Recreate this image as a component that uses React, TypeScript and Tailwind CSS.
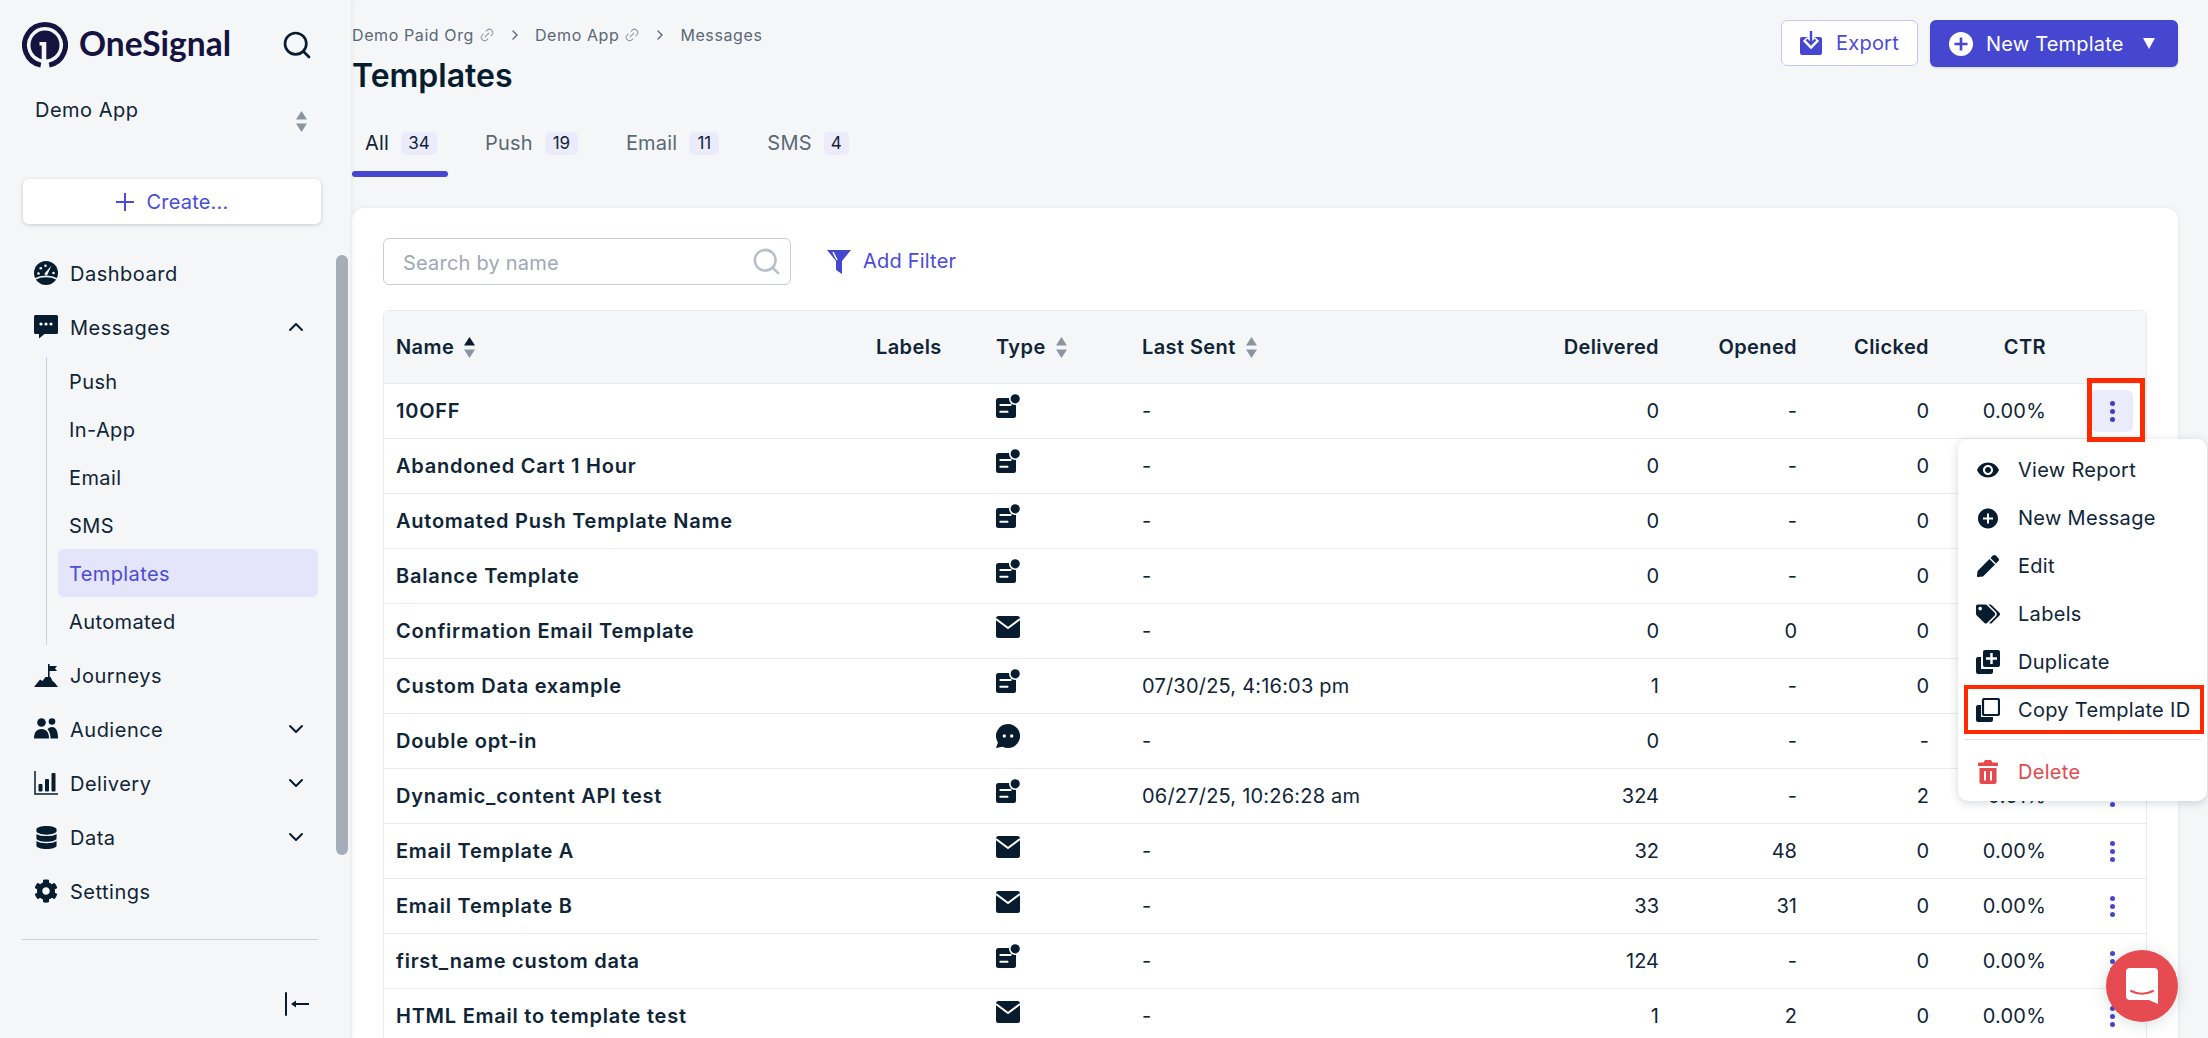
import { ChevronDown, ChevronRight, ChevronUp, Link2, Search } from "lucide-react";
import { FaCog, FaDatabase, FaPen, FaTags } from "react-icons/fa";
import { MdAddCircle, MdRemoveRedEye } from "react-icons/md";

type Kind = "push" | "mail" | "chat";

interface Row {
  name: string;
  kind: Kind;
  sent: string;
  delivered: string;
  opened: string;
  clicked: string;
  ctr: string;
}

// CTR is left empty on the rows the open menu covers
const ROWS: Row[] = [
  { name: "10OFF", kind: "push", sent: "-", delivered: "0", opened: "-", clicked: "0", ctr: "0.00%" },
  { name: "Abandoned Cart 1 Hour", kind: "push", sent: "-", delivered: "0", opened: "-", clicked: "0", ctr: "" },
  { name: "Automated Push Template Name", kind: "push", sent: "-", delivered: "0", opened: "-", clicked: "0", ctr: "" },
  { name: "Balance Template", kind: "push", sent: "-", delivered: "0", opened: "-", clicked: "0", ctr: "" },
  { name: "Confirmation Email Template", kind: "mail", sent: "-", delivered: "0", opened: "0", clicked: "0", ctr: "" },
  { name: "Custom Data example", kind: "push", sent: "07/30/25, 4:16:03 pm", delivered: "1", opened: "-", clicked: "0", ctr: "" },
  { name: "Double opt-in", kind: "chat", sent: "-", delivered: "0", opened: "-", clicked: "-", ctr: "" },
  { name: "Dynamic_content API test", kind: "push", sent: "06/27/25, 10:26:28 am", delivered: "324", opened: "-", clicked: "2", ctr: "0.51%" },
  { name: "Email Template A", kind: "mail", sent: "-", delivered: "32", opened: "48", clicked: "0", ctr: "0.00%" },
  { name: "Email Template B", kind: "mail", sent: "-", delivered: "33", opened: "31", clicked: "0", ctr: "0.00%" },
  { name: "first_name custom data", kind: "push", sent: "-", delivered: "124", opened: "-", clicked: "0", ctr: "0.00%" },
  { name: "HTML Email to template test", kind: "mail", sent: "-", delivered: "1", opened: "2", clicked: "0", ctr: "0.00%" },
];

function TypeIcon({ kind }: { kind: Kind }) {
  if (kind === "mail") {
    return (
      <svg width="24" height="22" viewBox="0 0 24 22" className="block mt-[1px]">
        <rect width="24" height="22" rx="2.5" fill="#071c2f" />
        <path d="M0 3l12 9 12-9" fill="none" stroke="#fff" strokeWidth="2" />
      </svg>
    );
  }
  if (kind === "chat") {
    return (
      <svg width="24" height="24" viewBox="0 0 24 24" className="block">
        <path d="M12 0a12 12 0 1 1-5.4 22.7L0 24l1.9-5.6A12 12 0 0 1 12 0z" fill="#071c2f" />
        <circle cx="8.3" cy="12" r="1.7" fill="#fff" />
        <circle cx="15.7" cy="12" r="1.7" fill="#fff" />
      </svg>
    );
  }
  return (
    <svg width="24" height="24" viewBox="0 0 24 24" className="block">
      <rect y="4" width="20" height="20" rx="2.5" fill="#071c2f" />
      <circle cx="19.2" cy="4.8" r="6.2" fill="#fff" />
      <circle cx="19.2" cy="4.8" r="4.6" fill="#071c2f" />
      <rect x="3.3" y="10" width="12.4" height="2" rx="1" fill="#fff" />
      <rect x="3.3" y="16.8" width="9.2" height="2" rx="1" fill="#fff" />
    </svg>
  );
}

function SortIcon({ active = false, className = "" }: { active?: boolean; className?: string }) {
  return (
    <svg width="11" height="21" viewBox="0 0 11 21" className={className}>
      <path d="M5.5 0L11 8.5H0z" fill={active ? "#071c2f" : "#8b95a0"} />
      <path d="M5.5 21L0 12.5h11z" fill="#8b95a0" />
    </svg>
  );
}

function Logo() {
  return (
    <svg width="46" height="46" viewBox="0 0 46 46" className="shrink-0">
      <path d="M18.8 43.1a20.5 20.5 0 1 1 8.4 0" fill="none" stroke="#15133f" strokeWidth="5" />
      <circle cx="23" cy="23" r="14.5" fill="#15133f" />
      <path d="M17.500 20h6.800v26h-4.600V23.500h-2.200z" fill="#f5f6f8" />
    </svg>
  );
}

function DashboardIcon() {
  return (
    <svg width="24" height="24" viewBox="0 0 24 24">
      <circle cx="12" cy="12" r="12" fill="#071c2f" />
      <path d="M10.500 12.500L17.500 4.500l-4.400 9.800a2.200 2.200 0 0 1-2.600-1.800z" fill="#f5f6f8" />
      <circle cx="4.500" cy="12.500" r="1.300" fill="#f5f6f8" />
      <circle cx="6.800" cy="7.300" r="1.300" fill="#f5f6f8" />
      <circle cx="11.500" cy="4.800" r="1.300" fill="#f5f6f8" />
      <circle cx="19.500" cy="12" r="1.300" fill="#f5f6f8" />
      <path d="M1 18c6-3.400 16-3.400 22 0" fill="none" stroke="#f5f6f8" strokeWidth="1.700" />
    </svg>
  );
}

function MessagesIcon() {
  return (
    <svg width="24" height="24" viewBox="0 0 24 24">
      <path d="M1.500 0h21A1.500 1.500 0 0 1 24 1.500v16a1.500 1.500 0 0 1-1.500 1.500H10.500L5 23.500V19H1.500A1.500 1.500 0 0 1 0 17.500v-16A1.500 1.500 0 0 1 1.500 0z" fill="#071c2f" />
      <circle cx="7" cy="9" r="1.600" fill="#fff" />
      <circle cx="12" cy="9" r="1.600" fill="#fff" />
      <circle cx="17" cy="9" r="1.600" fill="#fff" />
    </svg>
  );
}

function JourneysIcon() {
  return (
    <svg width="24" height="24" viewBox="0 0 24 24">
      <path d="M14 1h1.600v2H23l-2 2.500L23 8h-7.400v6H14z" fill="#071c2f" />
      <path d="M0 24l6-7.500 2.500 1.500 3-4h5l2 4 2 1.500 3.500 4.500z" fill="#071c2f" />
    </svg>
  );
}

function AudienceIcon() {
  return (
    <svg width="24" height="24" viewBox="0 0 24 24">
      <circle cx="7.500" cy="5.500" r="4.300" fill="#071c2f" />
      <circle cx="18" cy="4.500" r="3.300" fill="#071c2f" />
      <path d="M0 21.500c0-6 2.500-9.500 7.500-9.500s7.500 3.500 7.500 9.500z" fill="#071c2f" />
      <path d="M16.500 21.500c0-4-1-7-3-9.200 1.200-1.500 2.700-2.300 4.500-2.300 4 0 6 4 6 11.500z" fill="#071c2f" />
    </svg>
  );
}

function DeliveryIcon() {
  return (
    <svg width="24" height="24" viewBox="0 0 24 24">
      <path d="M1 0v23h23" fill="none" stroke="#071c2f" strokeWidth="1.500" />
      <rect x="4.500" y="13" width="4" height="7.500" rx="1" fill="#071c2f" />
      <rect x="11" y="8" width="4" height="12.500" rx="1" fill="#071c2f" />
      <rect x="17.500" y="2" width="4" height="18.500" rx="1" fill="#071c2f" />
    </svg>
  );
}

function NavItem({ label, icon, chevron }: { label: string; icon: React.ReactNode; chevron?: "up" | "down" }) {
  return (
    <div className="h-[54px] pl-[34px] pr-[43px] flex items-center text-[20px] text-[#0f2537]">
      <span className="w-[24px] h-[24px] flex items-center justify-center shrink-0">{icon}</span>
      <span className="ml-[12px] pt-[2px] tracking-[0.5px]">{label}</span>
      {chevron === "up" && <ChevronUp size={24} strokeWidth={2} className="ml-auto text-[#071c2f]" />}
      {chevron === "down" && <ChevronDown size={24} strokeWidth={2} className="ml-auto text-[#071c2f]" />}
    </div>
  );
}

function Sidebar() {
  return (
    <aside className="w-[352px] shrink-0 h-full relative flex flex-col border-r border-[#eceef1] shadow-[2px_0_4px_rgba(0,0,0,0.03)]">
      <div className="h-[89px] pl-[22px] pr-[38px] flex items-center">
        <Logo />
        <span className="ml-[11px] pb-[2px] text-[33.5px] font-bold text-[#15133f] [font-family:Lato,sans-serif]">OneSignal</span>
        <Search size={32} strokeWidth={2} className="ml-auto text-[#071c2f]" />
      </div>
      <div className="h-[90px] pl-[35px] pr-[44px] flex justify-between">
        <span className="text-[20px] leading-[28px] mt-[7px] text-[#0f2537] tracking-[0.5px]">Demo App</span>
        <SortIcon className="mt-[22px]" />
      </div>
      <button className="mx-[23px] w-[298px] h-[45px] shrink-0 bg-white rounded-[6px] shadow-[0_1px_4px_rgba(15,37,55,0.2)] flex items-center justify-center gap-[13px] text-[20px] text-[#4a4bd6] tracking-[0.2px]">
        <svg width="18" height="18" viewBox="0 0 18 18">
          <path d="M9 0v18M0 9h18" stroke="#4a4bd6" strokeWidth="2" />
        </svg>
        Create...
      </button>
      <nav className="mt-[22px]">
        <NavItem label="Dashboard" icon={<DashboardIcon />} />
        <NavItem label="Messages" icon={<MessagesIcon />} chevron="up" />
        <div className="ml-[46px] my-[3px] w-[272px] border-l border-[#c9d1db] pl-[11px] text-[20px] text-[#0f2537] tracking-[0.4px]">
          {["Push", "In-App", "Email", "SMS", "Templates", "Automated"].map((item) => (
            <div
              key={item}
              className={
                item === "Templates"
                  ? "h-[48px] pl-[11px] pt-[2px] flex items-center rounded-[6px] bg-[#e4e4fa] text-[#4a4bd6]"
                  : "h-[48px] pl-[11px] pt-[2px] flex items-center"
              }
            >
              {item}
            </div>
          ))}
        </div>
        <NavItem label="Journeys" icon={<JourneysIcon />} />
        <NavItem label="Audience" icon={<AudienceIcon />} chevron="down" />
        <NavItem label="Delivery" icon={<DeliveryIcon />} chevron="down" />
        <NavItem label="Data" icon={<FaDatabase size={23} className="text-[#071c2f]" />} chevron="down" />
        <NavItem label="Settings" icon={<FaCog size={24} className="text-[#071c2f]" />} />
      </nav>
      <div className="mx-[22px] mt-[21px] w-[296px] h-px bg-[#cdd1da]" />
      <div className="mt-[52px] pr-[42px] flex justify-end">
        <svg width="24" height="24" viewBox="0 0 24 24">
          <path d="M1 1v22" stroke="#071c2f" strokeWidth="2" strokeLinecap="round" />
          <path d="M8 11h16v2H8z" fill="#071c2f" />
          <path d="M6 12l5-3.500v7z" fill="#071c2f" />
        </svg>
      </div>
      {/* scroll thumb */}
      <div className="absolute left-[336px] top-[255px] w-[12px] h-[600px] rounded-[6px] bg-[#a4adb8]" />
    </aside>
  );
}

function Crumb({ label, link = false }: { label: string; link?: boolean }) {
  return (
    <span className="flex items-center">
      <span>{label}</span>
      {link && <Link2 size={16} strokeWidth={1.5} className="ml-[5px] -rotate-45 text-[#8b95a0]" />}
    </span>
  );
}

function Tab({ label, count, badge, active = false }: { label: string; count: string; badge: string; active?: boolean }) {
  return (
    <div className="flex flex-col">
      <div className="h-[46px] pl-[13px] pr-[11px] flex items-center">
        <span className={active ? "text-[20px] text-[#0f2537] tracking-[0.2px]" : "text-[20px] text-[#5b6877] tracking-[0.2px]"}>{label}</span>
        <span className={`ml-[12px] h-[23px] rounded-[5px] bg-[#ecebfb] text-center text-[17px] leading-[23px] text-[#0f2537] ${badge}`}>{count}</span>
      </div>
      <div className={active ? "mt-[5px] h-[6px] rounded-[3px] bg-[#4547d0]" : "mt-[5px] h-[6px]"} />
    </div>
  );
}

function Header() {
  return (
    <div className="flex justify-between pr-[30px]">
      <div>
        <div className="mt-[20px] h-[30px] flex items-center text-[16px] tracking-[0.6px] text-[#5b6877]">
          <Crumb label="Demo Paid Org" link />
          <ChevronRight size={16} strokeWidth={2} className="mx-[12px]" />
          <Crumb label="Demo App" link />
          <ChevronRight size={16} strokeWidth={2} className="mx-[12px]" />
          <Crumb label="Messages" />
        </div>
        <h1 className="h-[52px] text-[32px] leading-[52px] font-semibold text-[#071c2f]">Templates</h1>
        <div className="mt-[18px] flex gap-6">
          <Tab label="All" count="34" badge="w-[36px]" active />
          <Tab label="Push" count="19" badge="w-[33px]" />
          <Tab label="Email" count="11" badge="w-[30px]" />
          <Tab label="SMS" count="4" badge="w-[25px]" />
        </div>
      </div>
      <div className="mt-[20px] flex items-start gap-[12px]">
        <button className="w-[137px] h-[46px] flex items-center justify-center gap-[14px] bg-white border border-[#c5c4fb] rounded-[6px] text-[20px] text-[#4a4bd6] tracking-[0.2px]">
          <svg width="22" height="24" viewBox="0 0 22 24">
            <rect y="6" width="22" height="18" rx="2" fill="#4547d0" />
            <path d="M11 0v12M5 8l6 6 6-6" fill="none" stroke="#fff" strokeWidth="6" />
            <path d="M11 0v13M6.500 8.500l4.500 4.500 4.500-4.500" fill="none" stroke="#4547d0" strokeWidth="2.400" />
          </svg>
          Export
        </button>
        <button className="w-[248px] h-[47px] pl-[19px] flex items-center bg-[#4547d0] rounded-[6px] text-[20px] text-white tracking-[0.2px] shadow-[0_1px_2px_rgba(0,0,0,0.15)]">
          <svg width="24" height="24" viewBox="0 0 24 24">
            <circle cx="12" cy="12" r="12" fill="#fff" />
            <path d="M12 5.500v13M5.500 12h13" stroke="#4547d0" strokeWidth="2.600" />
          </svg>
          <span className="ml-[13px]">New Template</span>
          <svg width="12" height="11" viewBox="0 0 12 11" className="ml-[19px]">
            <path d="M0 0h12L6 11z" fill="#fff" />
          </svg>
        </button>
      </div>
    </div>
  );
}

function HeadCell({ children, right = false }: { children: React.ReactNode; right?: boolean }) {
  return <th className={right ? "px-[13px] text-right font-semibold tracking-[0.4px]" : "px-[13px] text-left font-semibold tracking-[0.4px]"}>{children}</th>;
}

function Table() {
  return (
    <table className="w-[1764px] table-fixed border-separate border-spacing-0 text-[20px] text-[#0f2537] border border-[#e8eaed] rounded-t-[6px]">
      <colgroup>
        <col className="w-[479px]" />
        <col className="w-[120px]" />
        <col className="w-[146px]" />
        <col className="w-[421px]" />
        <col className="w-[122px]" />
        <col className="w-[138px]" />
        <col className="w-[132px]" />
        <col className="w-[117px]" />
        <col />
      </colgroup>
      <thead>
        <tr className="h-[72px] bg-[#f5f6f8]">
          <th className="pl-[12px] text-left font-semibold tracking-[0.4px]">
            <span className="flex items-center">Name<SortIcon active className="ml-[10px]" /></span>
          </th>
          <HeadCell>Labels</HeadCell>
          <HeadCell>
            <span className="flex items-center">Type<SortIcon className="ml-[10px]" /></span>
          </HeadCell>
          <HeadCell>
            <span className="flex items-center">Last Sent<SortIcon className="ml-[10px]" /></span>
          </HeadCell>
          <HeadCell right>Delivered</HeadCell>
          <HeadCell right>Opened</HeadCell>
          <HeadCell right>Clicked</HeadCell>
          <HeadCell right>CTR</HeadCell>
          <th />
        </tr>
      </thead>
      <tbody>
        {ROWS.map((row, i) => (
          <tr key={row.name} className="h-[55px]">
            <td className="pl-[12px] font-semibold tracking-[0.75px] border-t border-[#e8eaed]">{row.name}</td>
            <td className="px-[13px] border-t border-[#e8eaed]" />
            <td className="px-[13px] border-t border-[#e8eaed]">
              <div className="-mt-[10px]"><TypeIcon kind={row.kind} /></div>
            </td>
            <td className="px-[13px] border-t border-[#e8eaed] tracking-[0.2px]">{row.sent}</td>
            <td className="px-[13px] text-right border-t border-[#e8eaed]">{row.delivered}</td>
            <td className="px-[13px] text-right border-t border-[#e8eaed]">{row.opened}</td>
            <td className="px-[13px] text-right border-t border-[#e8eaed]">{row.clicked}</td>
            <td className="px-[13px] text-right border-t border-[#e8eaed] tracking-[0.2px]">{row.ctr}</td>
            <td className="border-t border-[#e8eaed]">
              <div className={i === 0 ? "ml-[32px] w-[42px] h-[42px] rounded-[6px] bg-[#ecebfb] flex flex-col items-center justify-center gap-[3px]" : "ml-[32px] w-[42px] h-[42px] flex flex-col items-center justify-center gap-[3px]"}>
                <span className={i === 0 ? "w-[5px] h-[5px] rounded-full bg-[#3f40c0]" : "w-[5px] h-[5px] rounded-full bg-[#4547d0]"} />
                <span className={i === 0 ? "w-[5px] h-[5px] rounded-full bg-[#3f40c0]" : "w-[5px] h-[5px] rounded-full bg-[#4547d0]"} />
                <span className={i === 0 ? "w-[5px] h-[5px] rounded-full bg-[#3f40c0]" : "w-[5px] h-[5px] rounded-full bg-[#4547d0]"} />
              </div>
            </td>
          </tr>
        ))}
      </tbody>
    </table>
  );
}

function DuplicateIcon() {
  return (
    <svg width="24" height="24" viewBox="0 0 24 24">
      <path d="M2 7h3v12h12v3a2 2 0 0 1-2 2H2a2 2 0 0 1-2-2V9a2 2 0 0 1 2-2z" fill="#071c2f" />
      <rect x="7" y="0" width="17" height="17" rx="2" fill="#071c2f" />
      <path d="M15.500 3v11M10 8.500h11" stroke="#fff" strokeWidth="2.400" />
    </svg>
  );
}

function CopyIcon() {
  return (
    <svg width="24" height="24" viewBox="0 0 24 24">
      <path d="M2 7h3v12h12v3a2 2 0 0 1-2 2H2a2 2 0 0 1-2-2V9a2 2 0 0 1 2-2z" fill="#071c2f" />
      <rect x="7" y="1" width="16" height="16" rx="1.500" fill="#fff" stroke="#071c2f" strokeWidth="2.200" />
    </svg>
  );
}

function TrashIcon() {
  return (
    <svg width="20" height="24" viewBox="0 0 20 24">
      <path d="M7 0h6l1.500 2.500H19a1 1 0 0 1 1 1V6H0V3.500a1 1 0 0 1 1-1h4.500z" fill="#e5484d" />
      <path d="M1.500 8h17v14a2 2 0 0 1-2 2h-13a2 2 0 0 1-2-2z" fill="#e5484d" />
      <path d="M7 11v9.500M13 11v9.500" stroke="#fff" strokeWidth="2" />
    </svg>
  );
}

function MenuItem({ label, icon }: { label: string; icon: React.ReactNode }) {
  return (
    <div className="h-[48px] pl-[18px] flex items-center text-[20px] text-[#0f2537] tracking-[0.3px]">
      <span className="w-[24px] h-[24px] flex items-center justify-center shrink-0 text-[#071c2f]">{icon}</span>
      <span className="ml-[18px]">{label}</span>
    </div>
  );
}

function RowMenu() {
  return (
    <div className="absolute left-[1958px] top-[439px] w-[249px] h-[362px] pt-[7px] bg-white rounded-[10px] shadow-[0_2px_10px_rgba(15,37,55,0.18)]">
      <MenuItem label="View Report" icon={<MdRemoveRedEye size={28} />} />
      <MenuItem label="New Message" icon={<MdAddCircle size={29} />} />
      <MenuItem label="Edit" icon={<FaPen size={22} />} />
      <MenuItem label="Labels" icon={<FaTags size={24} />} />
      <MenuItem label="Duplicate" icon={<DuplicateIcon />} />
      <div className="relative">
        <MenuItem label="Copy Template ID" icon={<CopyIcon />} />
        <div className="absolute left-[6px] top-[-1px] w-[240px] h-[49px] border-[4px] border-[#ff2a00]" />
      </div>
      <div className="mx-[6px] mt-[5px] h-px bg-[#e3e5e9]" />
      <div className="mt-[8px] h-[48px] pl-[20px] flex items-center text-[20px] text-[#e5484d] tracking-[0.3px]">
        <TrashIcon />
        <span className="ml-[20px]">Delete</span>
      </div>
    </div>
  );
}

export default function App() {
  return (
    <div className="relative w-[2208px] h-[1038px] overflow-hidden flex bg-[#f5f6f8] [font-family:Inter,sans-serif]">
      <Sidebar />
      <main className="flex-1 min-w-0">
        <Header />
        <div className="mt-[31px] w-[1826px] h-[900px] pt-[30px] pl-[31px] bg-white rounded-[12px] shadow-[0_0_4px_rgba(15,37,55,0.08)]">
          <div className="flex items-center">
            <div className="w-[408px] h-[47px] pl-[19px] pr-[8px] flex items-center justify-between border border-[#c8ced6] rounded-[6px] text-[20px] text-[#9fa8b5] tracking-[0.2px]">
              <span className="pt-[2px]">Search by name</span>
              <Search size={31} strokeWidth={2} className="text-[#b9c0ca]" />
            </div>
            <svg width="24" height="24" viewBox="0 0 24 24" className="ml-[36px]">
              <path d="M0 0h24l-9 11v13l-6-4v-9z" fill="#4547d0" />
              <path d="M6 2l4 8" stroke="#fff" strokeWidth="1.500" />
            </svg>
            <span className="ml-[12px] pb-[2px] text-[20px] text-[#4a4bd6] tracking-[0.2px]">Add Filter</span>
          </div>
          <div className="mt-[25px]">
            <Table />
          </div>
        </div>
      </main>
      <RowMenu />
      {/* annotation around the row menu button */}
      <div className="absolute left-[2087px] top-[378px] w-[58px] h-[64px] border-[5px] border-[#ff2a00]" />
      <div className="absolute left-[2106px] top-[950px] w-[72px] h-[72px] rounded-full bg-[#e54b50] shadow-[0_2px_16px_rgba(15,37,55,0.15)] flex items-center justify-center">
        <svg width="32" height="36" viewBox="0 0 32 36">
          <path d="M4 0h24a4 4 0 0 1 4 4v32l-9-4H4a4 4 0 0 1-4-4V4a4 4 0 0 1 4-4z" fill="#fff" />
          <path d="M5 23c7 3.500 15 3.500 22 0" fill="none" stroke="#e54b50" strokeWidth="2" strokeLinecap="round" />
        </svg>
      </div>
    </div>
  );
}
